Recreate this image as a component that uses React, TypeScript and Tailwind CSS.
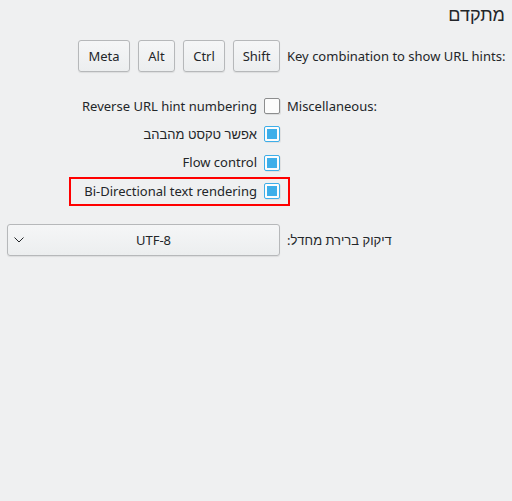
import React from "react";

const Checkbox = ({ checked }: { checked: boolean }) =>
  checked ? (
    <div className="w-[16px] h-[16px] rounded-[2px] border border-[#3daee9] bg-[#fcfcfc] flex items-center justify-center shadow-[1px_1px_0_rgba(0,0,0,0.06)]">
      <div className="w-[10px] h-[10px] bg-[#3daee9]" />
    </div>
  ) : (
    <div className="w-[16px] h-[16px] rounded-[2px] border border-[#8c8d8e] bg-[#fcfcfc] shadow-[1px_1px_0_rgba(0,0,0,0.08)]" />
  );

const KeyButton = ({ label, w }: { label: string; w: string }) => (
  <div
    className={`${w} h-[32px] rounded-[3px] border border-[#b6b8ba] bg-gradient-to-b from-[#f5f6f7] to-[#eceeef] flex items-center justify-center shadow-[0_1px_1px_rgba(0,0,0,0.08)]`}
  >
    {label}
  </div>
);

export default function App() {
  return (
    <div
      className="w-[512px] h-[501px] bg-[#eff0f1] text-[#232629] text-[13px] leading-none overflow-hidden"
      style={{ fontFamily: '"Noto Sans", "Noto Sans CJK SC", sans-serif' }}
    >
      <div className="flex justify-end pr-[7px] pt-[5px] h-[30px] text-[18px]">
        <span dir="rtl">מתקדם</span>
      </div>

      <div className="flex items-center mt-[10px] h-[32px]">
        <div className="w-[280px] flex justify-end gap-[8px]">
          <KeyButton label="Meta" w="w-[52px]" />
          <KeyButton label="Alt" w="w-[37px]" />
          <KeyButton label="Ctrl" w="w-[42px]" />
          <KeyButton label="Shift" w="w-[47px]" />
        </div>
        <div className="pl-[7px]">Key combination to show URL hints:</div>
      </div>

      <div className="mt-[20px]">
        <div className="flex items-center h-[28px]">
          <div className="w-[280px] flex justify-end items-center gap-[7px]">
            <span>Reverse URL hint numbering</span>
            <Checkbox checked={false} />
          </div>
          <div className="pl-[7px]">Miscellaneous:</div>
        </div>
        <div className="flex items-center h-[28px]">
          <div className="w-[280px] flex justify-end items-center gap-[7px]">
            <span dir="rtl">אפשר טקסט מהבהב</span>
            <Checkbox checked={true} />
          </div>
        </div>
        <div className="flex items-center h-[29px]">
          <div className="w-[280px] flex justify-end items-center gap-[7px]">
            <span>Flow control</span>
            <Checkbox checked={true} />
          </div>
        </div>
        <div className="flex items-center h-[30px] -mt-[1px]">
          <div className="w-[280px] flex justify-end">
            <div className="w-[221px] h-[29px] -mr-[10px] border-2 border-[#ff0000] flex justify-end items-center gap-[7px] pr-[8px]">
              <span>Bi-Directional text rendering</span>
              <Checkbox checked={true} />
            </div>
          </div>
        </div>
      </div>

      <div className="flex items-center mt-[18px] h-[32px]">
        <div className="w-[280px] flex justify-end">
          <div className="w-[273px] h-[32px] rounded-[3px] border border-[#b6b8ba] bg-gradient-to-b from-[#f5f6f7] to-[#eceeef] flex items-center relative pl-[20px] shadow-[0_1px_1px_rgba(0,0,0,0.08)]">
            <svg className="absolute left-[6px]" width="10" height="6" viewBox="0 0 10 6" fill="none">
              <path d="M0.5 0.5 L5 5 L9.5 0.5" stroke="#232629" strokeWidth="1" />
            </svg>
            <div className="flex-1 text-center">UTF-8</div>
          </div>
        </div>
        <div className="pl-[7px]" dir="rtl">דיקוק ברירת מחדל:</div>
      </div>
    </div>
  );
}
